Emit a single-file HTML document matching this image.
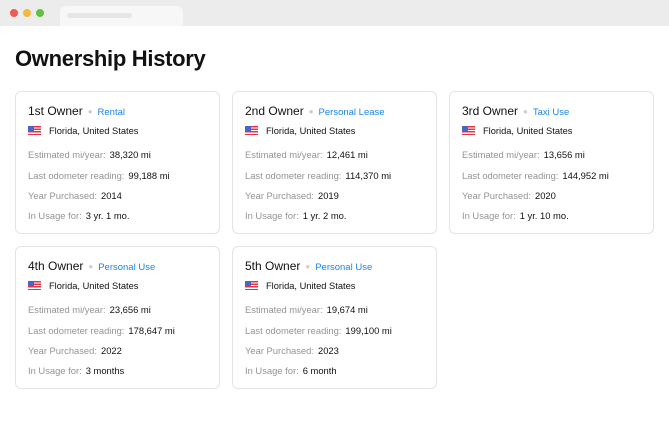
<!DOCTYPE html><html><head><style>
*{margin:0;padding:0;box-sizing:border-box}
body{width:669px;height:422px;background:#fff;font-family:"Liberation Sans",sans-serif;position:relative;overflow:hidden}
.bar{position:absolute;left:0;top:0;width:669px;height:26px;background:#ececec}
.dot{position:absolute;top:9px;width:8px;height:8px;border-radius:50%}
.tab{position:absolute;left:60px;top:6px;width:123px;height:20px;background:#f7f7f7;border-radius:6px 6px 0 0}
.tab i{position:absolute;left:7px;top:7px;width:65px;height:5px;background:#e6e6e6;border-radius:3px}
h1{position:absolute;left:15px;top:46px;font-size:22px;font-weight:bold;color:#111;letter-spacing:-0.3px}
.card{position:absolute;width:205px;height:143px;border:1px solid #e4e4e4;border-radius:6px}
.t{position:absolute;left:12px;top:12px;font-size:12px;color:#111;white-space:nowrap}
.t .d{color:#ccc;margin:0 5px;font-size:8px;vertical-align:1px}
.t .b{color:#1a85f0;font-size:9.5px}
.f{position:absolute;left:12px;top:34px;font-size:9.3px;color:#111;white-space:nowrap}
.flag{display:inline-block;width:13px;height:9px;vertical-align:-1px;margin-right:8px;background:repeating-linear-gradient(#e0334a 0 1.3px,#fff 1.3px 2.6px);position:relative}
.flag:before{content:"";position:absolute;left:0;top:0;width:6px;height:5px;background:#4a64c8}
.r{position:absolute;left:12px;font-size:9.4px;color:#949494;white-space:nowrap}
.r b{font-weight:normal;color:#111;margin-left:4px}
</style></head><body>
<div class="bar"><div class="dot" style="left:10px;background:#ed5a55"></div><div class="dot" style="left:23px;background:#f3b93b"></div><div class="dot" style="left:36px;background:#5fc140"></div><div class="tab"><i></i></div></div>
<h1>Ownership History</h1>

<div class="card" style="left:15px;top:91px"><div class="t">1st Owner<span class="d">●</span><span class="b">Rental</span></div><div class="f"><span class="flag"></span>Florida, United States</div>
<div class="r" style="top:57px">Estimated mi/year:<b>38,320 mi</b></div><div class="r" style="top:78px">Last odometer reading:<b>99,188 mi</b></div><div class="r" style="top:98px">Year Purchased:<b>2014</b></div><div class="r" style="top:118px">In Usage for:<b>3 yr. 1 mo.</b></div></div>

<div class="card" style="left:232px;top:91px"><div class="t">2nd Owner<span class="d">●</span><span class="b">Personal Lease</span></div><div class="f"><span class="flag"></span>Florida, United States</div>
<div class="r" style="top:57px">Estimated mi/year:<b>12,461 mi</b></div><div class="r" style="top:78px">Last odometer reading:<b>114,370 mi</b></div><div class="r" style="top:98px">Year Purchased:<b>2019</b></div><div class="r" style="top:118px">In Usage for:<b>1 yr. 2 mo.</b></div></div>

<div class="card" style="left:449px;top:91px"><div class="t">3rd Owner<span class="d">●</span><span class="b">Taxi Use</span></div><div class="f"><span class="flag"></span>Florida, United States</div>
<div class="r" style="top:57px">Estimated mi/year:<b>13,656 mi</b></div><div class="r" style="top:78px">Last odometer reading:<b>144,952 mi</b></div><div class="r" style="top:98px">Year Purchased:<b>2020</b></div><div class="r" style="top:118px">In Usage for:<b>1 yr. 10 mo.</b></div></div>

<div class="card" style="left:15px;top:246px"><div class="t">4th Owner<span class="d">●</span><span class="b">Personal Use</span></div><div class="f"><span class="flag"></span>Florida, United States</div>
<div class="r" style="top:57px">Estimated mi/year:<b>23,656 mi</b></div><div class="r" style="top:78px">Last odometer reading:<b>178,647 mi</b></div><div class="r" style="top:98px">Year Purchased:<b>2022</b></div><div class="r" style="top:118px">In Usage for:<b>3 months</b></div></div>

<div class="card" style="left:232px;top:246px"><div class="t">5th Owner<span class="d">●</span><span class="b">Personal Use</span></div><div class="f"><span class="flag"></span>Florida, United States</div>
<div class="r" style="top:57px">Estimated mi/year:<b>19,674 mi</b></div><div class="r" style="top:78px">Last odometer reading:<b>199,100 mi</b></div><div class="r" style="top:98px">Year Purchased:<b>2023</b></div><div class="r" style="top:118px">In Usage for:<b>6 month</b></div></div>
</body></html>
